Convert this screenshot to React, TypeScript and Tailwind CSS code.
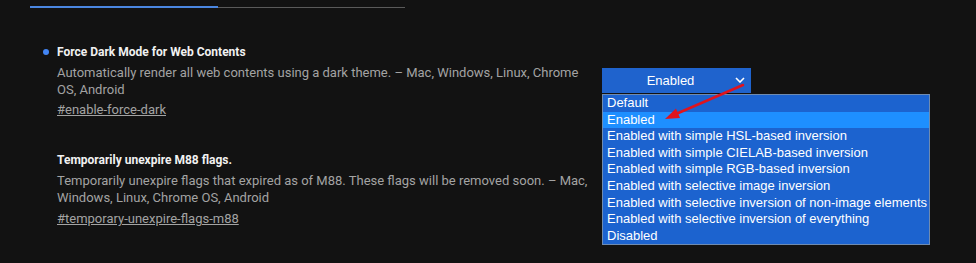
import { useState } from "react";

const options = [
  "Default",
  "Enabled",
  "Enabled with simple HSL-based inversion",
  "Enabled with simple CIELAB-based inversion",
  "Enabled with simple RGB-based inversion",
  "Enabled with selective image inversion",
  "Enabled with selective inversion of non-image elements",
  "Enabled with selective inversion of everything",
  "Disabled",
];

function Chevron() {
  return (
    <svg width="10" height="6" viewBox="0 0 10 6" className="text-white">
      <path d="M1 1 L5 5 L9 1" fill="none" stroke="currentColor" strokeWidth="1.6" />
    </svg>
  );
}

function App() {
  const [selected] = useState(1);

  return (
    <div className="relative w-[976px] h-[263px] overflow-hidden bg-[#121212] font-['Roboto',sans-serif]">
      {/* tab strip */}
      <div className="ml-[30px] pt-[6px] flex w-[375px]">
        <div className="w-[188px] h-[2px] bg-[#4a86e0]" />
        <div className="flex-1 h-px mt-px bg-[#5a5a5a]" />
      </div>

      {/* flag 1 */}
      <div className="mt-[36px] ml-[43px] flex">
        <div className="w-[14px] shrink-0">
          <div className="w-[6px] h-[6px] mt-[5px] rounded-full bg-[#4285f4]" />
        </div>
        <div className="w-[536px] shrink-0">
          <h3 className="text-[12px] leading-[16px] font-bold text-[#f1f1f1]">
            Force Dark Mode for Web Contents
          </h3>
          <p className="mt-[4px] text-[13px] leading-[17px] text-[#a3a3a3]">
            Automatically render all web contents using a dark theme. – Mac, Windows, Linux, Chrome OS, Android
          </p>
          <a className="block mt-[3px] text-[13px] leading-[17px] text-[#a3a3a3] underline">
            #enable-force-dark
          </a>
        </div>
        <div className="relative ml-[9px] mt-[24px]">
          <div className="w-[149px] h-[25px] bg-[#1f63cd] flex items-center font-['Liberation_Sans',Arial,sans-serif] text-[13px] text-white">
            <span className="flex-1 text-center pl-[4px]">Enabled</span>
            <span className="pr-[6px] pb-[1px]">
              <Chevron />
            </span>
          </div>
          <ul className="absolute left-0 top-[26px] w-[328px] border border-[#6f8bb0] bg-[#1c63cf] font-['Liberation_Sans',Arial,sans-serif] text-[13px] text-white">
            {options.map((o, i) => (
              <li
                key={o}
                className={
                  i === selected
                    ? "h-[16.6px] leading-[16.6px] pl-[4px] bg-[#1e8fff] whitespace-nowrap"
                    : "h-[16.6px] leading-[16.6px] pl-[4px] whitespace-nowrap"
                }
              >
                {o}
              </li>
            ))}
          </ul>
        </div>
      </div>

      {/* flag 2 */}
      <div className="mt-[34px] ml-[57px] w-[536px]">
        <h3 className="text-[12px] leading-[16px] font-bold text-[#f1f1f1]">
          Temporarily unexpire M88 flags.
        </h3>
        <p className="mt-[4px] text-[13px] leading-[17px] text-[#a3a3a3]">
          Temporarily unexpire flags that expired as of M88. These flags will be removed soon. – Mac, Windows, Linux, Chrome OS, Android
        </p>
        <a className="block mt-[4px] text-[13px] leading-[17px] text-[#a3a3a3] underline">
          #temporary-unexpire-flags-m88
        </a>
      </div>

      {/* red annotation arrow */}
      <svg className="absolute left-0 top-0 pointer-events-none" width="976" height="263">
        <line x1="743" y1="85" x2="676" y2="114" stroke="#e0141e" strokeWidth="2.5" strokeLinecap="round" />
        <polygon points="665,119 680,118 676,108.5" fill="#e0141e" />
      </svg>
    </div>
  );
}

export default App;
